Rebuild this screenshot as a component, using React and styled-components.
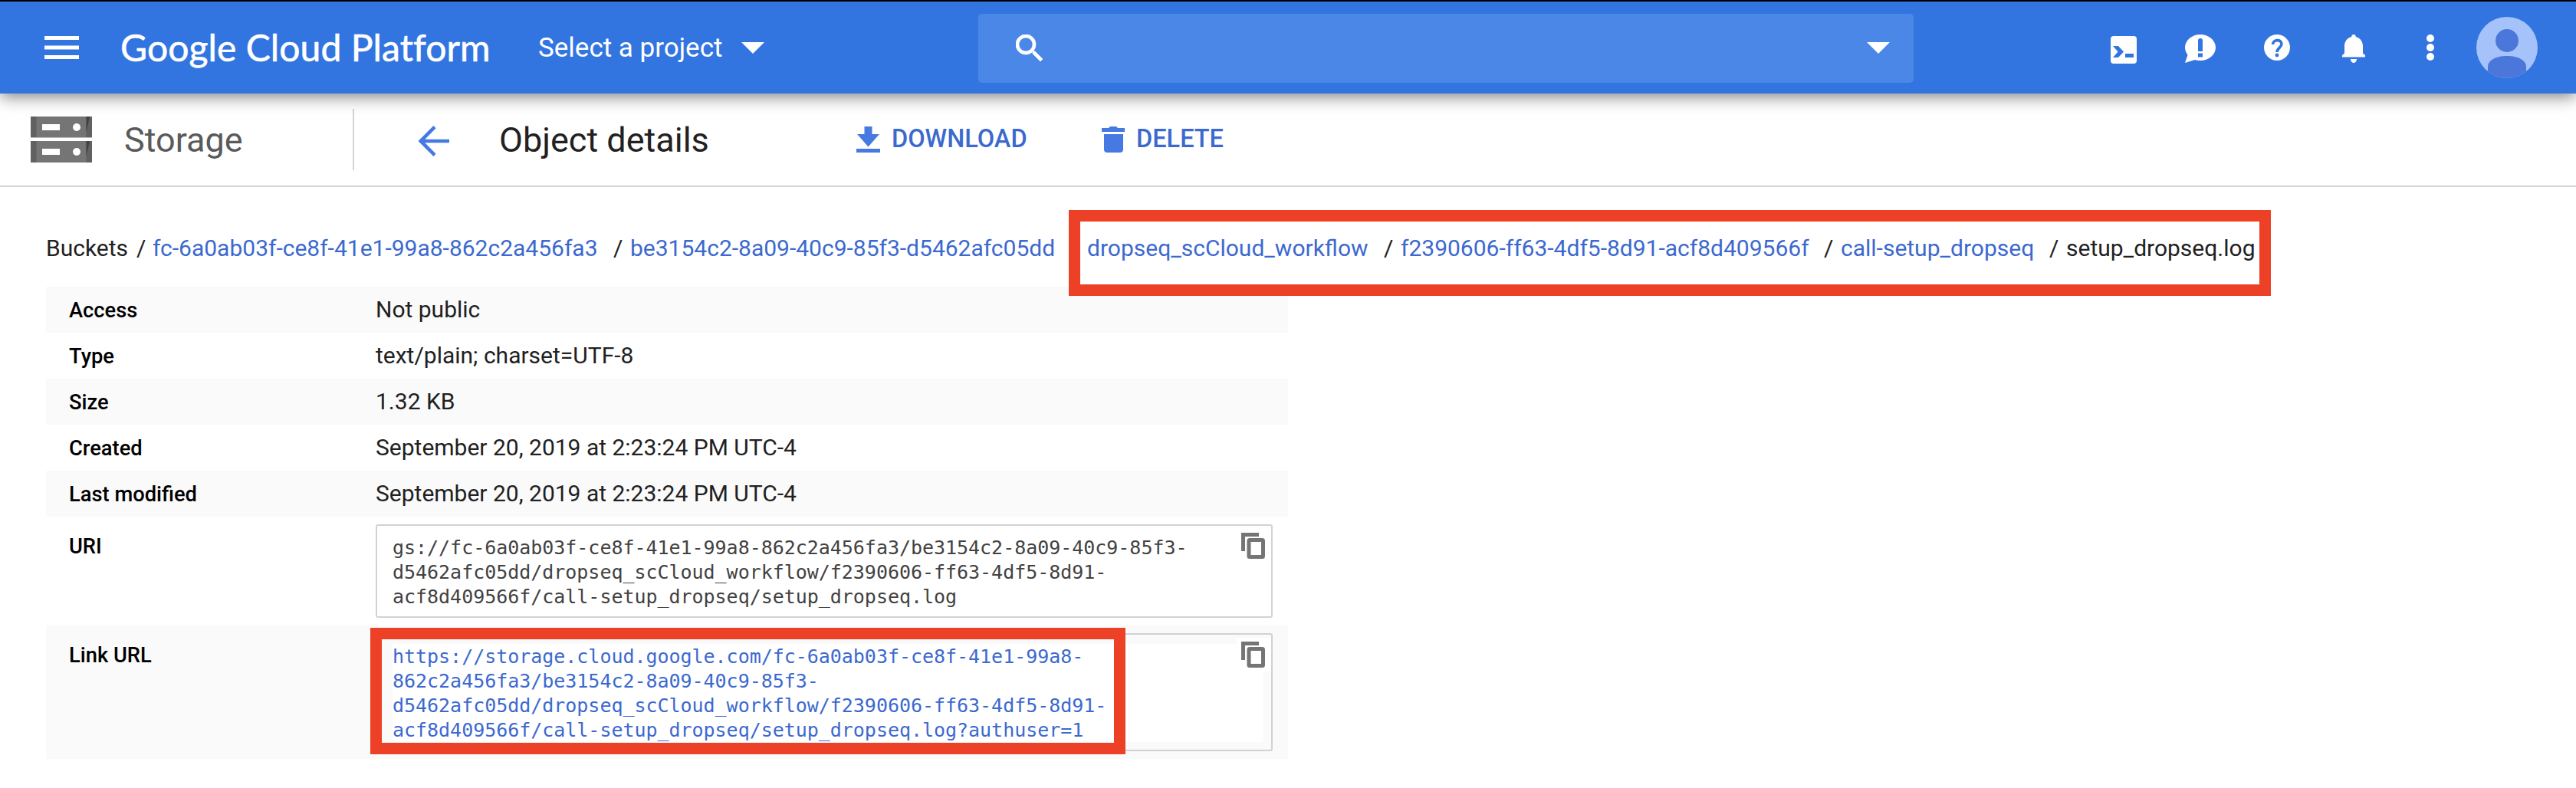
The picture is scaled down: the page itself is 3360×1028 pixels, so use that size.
import React from "react";
import styled, { createGlobalStyle } from "styled-components";

const GlobalStyle = createGlobalStyle`
  *, *::before, *::after { box-sizing: border-box; }
  body {
    margin: 0;
    background: #fff;
    color: #212121;
    font-family: Roboto, "Liberation Sans", sans-serif;
  }
  svg { display: block; flex: none; }
`;

const Page = styled.div`
  position: relative;
  width: 3360px;
  height: 1028px;
  overflow: hidden;
  background: #fff;
`;

const TopBar = styled.header`
  position: relative;
  z-index: 2;
  display: flex;
  align-items: center;
  height: 122px;
  padding: 0 50px 0 58px;
  border-top: 2px solid #000;
  background: #3275e1;
  color: #fff;
  box-shadow: 0 4px 20px rgba(0, 0, 0, 0.5);
`;

const Brand = styled.div`
  width: 599px;
  padding: 0 0 1px 54px;
  font-family: Lato, Roboto, sans-serif;
  font-size: 48px;
  letter-spacing: 0.1px;
  line-height: 60px;
  -webkit-text-stroke: 0.6px #fff;
  white-space: nowrap;
`;

const ProjectPicker = styled.div`
  display: flex;
  align-items: center;
  gap: 25px;
  width: 574px;
  font-size: 35px;
  white-space: nowrap;
`;

const SearchBox = styled.div`
  display: flex;
  align-items: center;
  justify-content: space-between;
  width: 1220px;
  height: 90px;
  padding: 0 31px 2px 49px;
  margin-top: 2px;
  border-radius: 5px;
  background: #4b87e6;
`;

const Tools = styled.div`
  display: flex;
  align-items: center;
  margin-left: auto;
`;

const Tool = styled.div`
  display: flex;
  justify-content: center;
  width: 100px;
  padding-top: ${(p) => p.$drop || "0"};
`;

const AvatarSlot = styled.div`
  width: 80px;
  margin-left: 10px;
`;

const SubBar = styled.div`
  display: flex;
  align-items: center;
  height: 122px;
  padding-left: 40px;
  border-bottom: 2px solid #d2d2d2;
`;

const Product = styled.div`
  display: flex;
  align-items: center;
  gap: 42px;
  width: 422px;
  height: 80px;
  border-right: 2px solid #d4d4d4;
  color: #5a5a5a;
  font-size: 45px;
`;

const BackSlot = styled.div`
  width: 189px;
  padding: 4px 0 0 83px;
`;

const Title = styled.h1`
  width: 466px;
  margin: 0;
  font-size: 45px;
  font-weight: 400;
`;

const Action = styled.div`
  display: flex;
  align-items: center;
  gap: 15px;
  width: ${(p) => p.$width};
  color: #3c69cf;
  font-size: 32.5px;
  font-weight: 500;
`;

const ActionText = styled.span`
  margin-top: -2px;
`;

const Breadcrumbs = styled.nav`
  display: flex;
  height: 130px;
  padding: 50px 0 0 60px;
  font-size: 30px;
  line-height: 60px;
  white-space: nowrap;
`;

const Crumb = styled.span`
  width: ${(p) => p.$width};
  color: ${(p) => (p.$link ? "#3c69cf" : "#212121")};
`;

const Details = styled.dl`
  width: 1620px;
  margin: 0 0 0 60px;
`;

const Row = styled.div`
  display: flex;
  height: ${(p) => p.$height};
  padding: 0 20px 0 30px;
  background: ${(p) => (p.$shaded ? "#fafafa" : "#fff")};
`;

const Label = styled.dt`
  width: 400px;
  padding-top: ${(p) => p.$offset};
  color: #000;
  font-size: 27.3px;
  font-weight: 500;
  line-height: 60px;
`;

const Value = styled.dd`
  flex: 1;
  margin: 0;
  font-size: 30px;
  line-height: 60px;
`;

const UrlBox = styled.div`
  display: flex;
  margin-top: 10px;
  height: ${(p) => p.$height};
  padding: 12px 10px 10px 20px;
  border: 2px solid #d2d2d2;
  border-radius: 3px;
  font-family: "DejaVu Sans Mono", "Liberation Mono", monospace;
  font-size: 25px;
  letter-spacing: -0.03px;
  line-height: 32px;
`;

const UrlText = styled.div`
  flex: 1;
  padding-top: 1px;
  background: #fff;
  color: ${(p) => (p.$link ? "#3c69cf" : "#424242")};
  white-space: pre;
`;

const CopyButton = styled.div`
  width: 45px;
  height: 44px;
  margin: -8px -10px 0 -35px;
  padding: 5px 0 0 6px;
  background: #fff;
`;

const Highlight = styled.div`
  position: absolute;
  z-index: 3;
  left: ${(p) => p.$x};
  top: ${(p) => p.$y};
  width: ${(p) => p.$width};
  height: ${(p) => p.$height};
  border: 15px solid #ed4127;
`;

const MenuIcon = () => (
  <svg width="45" height="31" viewBox="0 0 45 31" fill="#fff">
    <path d="M0 0h45v5H0zM0 12.500h45v5H0zM0 25h45v5H0z" />
  </svg>
);

const Caret = () => (
  <svg width="30" height="15" viewBox="0 0 30 15" fill="#fff">
    <path d="M0 0h30L15 15z" />
  </svg>
);

const SearchIcon = () => (
  <svg width="35" height="35" viewBox="3 3 17.5 17.500" fill="#fff" stroke="#fff" strokeWidth="0.4">
    <path d="M15.500 14h-.79l-.28-.27A6.471 6.471 0 0 0 16 9.500 6.500 6.500 0 1 0 9.500 16c1.610 0 3.090-.59 4.230-1.570l.27.28v.79l5 4.990L20.490 19l-4.990-5zm-6 0C7.010 14 5 11.990 5 9.500S7.010 5 9.500 5 14 7.010 14 9.500 11.990 14 9.500 14z" />
  </svg>
);

const ShellIcon = () => (
  <svg width="34" height="36" viewBox="0 0 34 36">
    <rect width="34" height="36" rx="4" fill="#fff" />
    <path d="M3 13h7l7 7.500L10 28H3l6.500-7.500zM19 23h11v5H19z" fill="#3275e1" />
  </svg>
);

const FeedbackIcon = () => (
  <svg width="40" height="37" viewBox="0 0 40 37">
    <path d="M20 0c11 0 20 7.600 20 17s-9 17-20 17c-2.500 0-5-.4-7-1L0 37l3.500-10.500C1.300 23.800 0 20.500 0 17 0 7.600 9 0 20 0z" fill="#fff" />
    <path d="M17 8q0-3 3-3t3 3v14h-6zM17 24.500h6v5h-6z" fill="#3275e1" />
  </svg>
);

const HelpIcon = () => (
  <svg width="34" height="34" viewBox="0 0 34 34">
    <circle cx="17" cy="17" r="17" fill="#fff" />
    <path d="M11.500 13c0-7 11.500-7 11.500-.8 0 5-6 5.300-6 10.800" fill="none" stroke="#3275e1" strokeWidth="3.600" />
    <circle cx="17" cy="27" r="2.400" fill="#3275e1" />
  </svg>
);

const BellIcon = () => (
  <svg width="30" height="37" viewBox="0 0 30 37" fill="#fff">
    <path d="M15 0c1.700 0 2.800 1.200 2.800 3 6 1.500 9.200 6.500 9.200 12.500v9l3 2.500v2.500H0V27l3-2.500v-9C3 9.500 6.200 4.500 12.200 3 12.200 1.200 13.300 0 15 0zM11 32h8c0 2.800-1.800 5-4 5s-4-2.200-4-5z" />
  </svg>
);

const MoreIcon = () => (
  <svg width="10" height="34" viewBox="0 0 10 34" fill="#fff">
    <circle cx="5" cy="5" r="5" />
    <circle cx="5" cy="17" r="5" />
    <circle cx="5" cy="29" r="5" />
  </svg>
);

const Avatar = () => (
  <svg width="80" height="80" viewBox="0 0 80 80">
    <clipPath id="avatar-disc">
      <circle cx="40" cy="40" r="40" />
    </clipPath>
    <g clipPath="url(#avatar-disc)">
      <rect width="80" height="80" fill="#a5c3fa" />
      <circle cx="40" cy="31" r="15" fill="#4b77da" />
      <path d="M15 80V65c0-8 10-14 25-14s25 6 25 14v15z" fill="#4b77da" />
    </g>
  </svg>
);

const StorageIcon = () => (
  <svg width="80" height="60" viewBox="0 0 80 60">
    {[0, 32].map((y) => (
      <g key={y} transform={`translate(0 ${y})`}>
        <path d="M0 0h80v28H0z" fill="#757575" />
        <path d="M0 0h7.500v28H0z" fill="#616161" />
        <path d="M72.500 0H80v28h-7.500z" fill="#616161" />
        <path d="M72.500 0H77l-4.500 20z" fill="#424242" />
        <path d="M15 10h23v8H15z" fill="#fff" />
        <circle cx="60" cy="14" r="5" fill="#fff" />
      </g>
    ))}
    <path d="M0 27h80v1H0z" fill="#bdbdbd" />
  </svg>
);

const BackIcon = () => (
  <svg width="41" height="40" viewBox="0 0 41 40" fill="none" stroke="#467ae2" strokeWidth="4.600">
    <path d="M22 1.700 3.700 20 22 38.300M4 20h37" />
  </svg>
);

const DownloadIcon = () => (
  <svg width="31" height="34" viewBox="0 0 31 34" fill="#467ae2">
    <path d="M10.500 0h10v10H30L15.500 26.500 1 10h9.500zM0 29h31v5H0z" />
  </svg>
);

const DeleteIcon = () => (
  <svg width="30" height="34" viewBox="0 0 30 34" fill="#467ae2">
    <path d="M0 2h9l2-2h8l2 2h9v5H0zM3 10h25v20c0 2.500-1.500 4-4 4H7c-2.500 0-4-1.500-4-4z" />
  </svg>
);

const CopyIcon = () => (
  <svg width="31" height="34" viewBox="0 0 31 34">
    <path d="M2.500 24V2.500H23" fill="none" stroke="#757575" strokeWidth="5" />
    <rect x="10" y="9.500" width="18.500" height="22" rx="1" fill="none" stroke="#757575" strokeWidth="5" />
  </svg>
);

const crumbs = [
  { text: "Buckets", width: "118px" },
  { text: "/", width: "21px" },
  { text: "fc-6a0ab03f-ce8f-41e1-99a8-862c2a456fa3", width: "601px", link: true },
  { text: "/", width: "22px" },
  { text: "be3154c2-8a09-40c9-85f3-d5462afc05dd", width: "574px", link: true },
  { text: "/", width: "22px" },
  { text: "dropseq_scCloud_workflow", width: "387px", link: true },
  { text: "/", width: "22px" },
  { text: "f2390606-ff63-4df5-8d91-acf8d409566f", width: "552px", link: true },
  { text: "/", width: "22px" },
  { text: "call-setup_dropseq", width: "272px", link: true },
  { text: "/", width: "22px" },
  { text: "setup_dropseq.log", width: "260px" },
];

const facts = [
  ["Access", "Not public"],
  ["Type", "text/plain; charset=UTF-8"],
  ["Size", "1.32 KB"],
  ["Created", "September 20, 2019 at 2:23:24 PM UTC-4"],
  ["Last modified", "September 20, 2019 at 2:23:24 PM UTC-4"],
];

const uri = [
  "gs://fc-6a0ab03f-ce8f-41e1-99a8-862c2a456fa3/be3154c2-8a09-40c9-85f3-",
  "d5462afc05dd/dropseq_scCloud_workflow/f2390606-ff63-4df5-8d91-",
  "acf8d409566f/call-setup_dropseq/setup_dropseq.log",
].join("\n");

const linkUrl = [
  "https://storage.cloud.google.com/fc-6a0ab03f-ce8f-41e1-99a8-",
  "862c2a456fa3/be3154c2-8a09-40c9-85f3-",
  "d5462afc05dd/dropseq_scCloud_workflow/f2390606-ff63-4df5-8d91-",
  "acf8d409566f/call-setup_dropseq/setup_dropseq.log?authuser=1",
].join("\n");

export default function App() {
  return (
    <Page>
      <GlobalStyle />
      <TopBar>
        <MenuIcon />
        <Brand>Google Cloud Platform</Brand>
        <ProjectPicker>
          Select a project
          <Caret />
        </ProjectPicker>
        <SearchBox>
          <SearchIcon />
          <Caret />
        </SearchBox>
        <Tools>
          <Tool $drop="6px"><ShellIcon /></Tool>
          <Tool $drop="3px"><FeedbackIcon /></Tool>
          <Tool><HelpIcon /></Tool>
          <Tool $drop="3px"><BellIcon /></Tool>
          <Tool><MoreIcon /></Tool>
          <AvatarSlot><Avatar /></AvatarSlot>
        </Tools>
      </TopBar>
      <SubBar>
        <Product>
          <StorageIcon />
          Storage
        </Product>
        <BackSlot><BackIcon /></BackSlot>
        <Title>Object details</Title>
        <Action $width="320px">
          <DownloadIcon />
          <ActionText>DOWNLOAD</ActionText>
        </Action>
        <Action $width="200px">
          <DeleteIcon />
          <ActionText>DELETE</ActionText>
        </Action>
      </SubBar>
      <Breadcrumbs>
        {crumbs.map((c, i) => (
          <Crumb key={i} $width={c.width} $link={c.link}>{c.text}</Crumb>
        ))}
      </Breadcrumbs>
      <Details>
        {facts.map(([label, value], i) => (
          <Row key={label} $height="60px" $shaded={i % 2 === 0}>
            <Label $offset="1px">{label}</Label>
            <Value>{value}</Value>
          </Row>
        ))}
        <Row $height="142px">
          <Label $offset="9px">URI</Label>
          <Value>
            <UrlBox $height="122px">
              <UrlText>{uri}</UrlText>
              <CopyButton><CopyIcon /></CopyButton>
            </UrlBox>
          </Value>
        </Row>
        <Row $height="174px" $shaded>
          <Label $offset="9px">Link URL</Label>
          <Value>
            <UrlBox $height="154px">
              <UrlText $link>{linkUrl}</UrlText>
              <CopyButton><CopyIcon /></CopyButton>
            </UrlBox>
          </Value>
        </Row>
      </Details>
      <Highlight $x="1394px" $y="274px" $width="1568px" $height="112px" />
      <Highlight $x="483px" $y="819px" $width="985px" $height="165px" />
    </Page>
  );
}
